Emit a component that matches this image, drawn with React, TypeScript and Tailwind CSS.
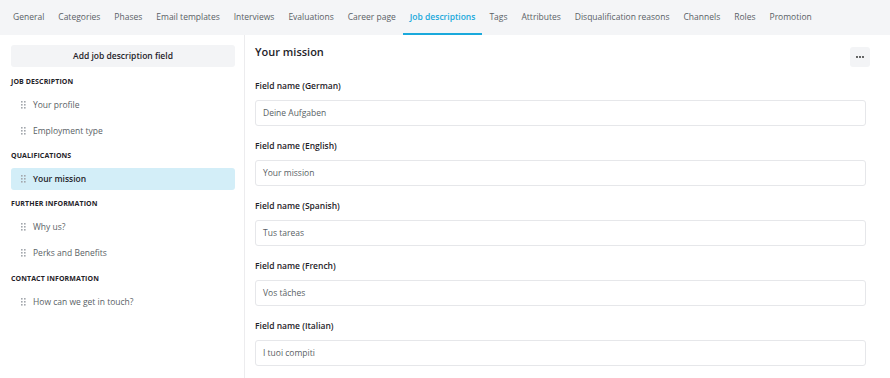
import React from "react";

const tabs = [
  "General",
  "Categories",
  "Phases",
  "Email templates",
  "Interviews",
  "Evaluations",
  "Career page",
  "Job descriptions",
  "Tags",
  "Attributes",
  "Disqualification reasons",
  "Channels",
  "Roles",
  "Promotion",
];

const sections = [
  { title: "JOB DESCRIPTION", items: ["Your profile", "Employment type"] },
  { title: "QUALIFICATIONS", items: ["Your mission"] },
  { title: "FURTHER INFORMATION", items: ["Why us?", "Perks and Benefits"] },
  { title: "CONTACT INFORMATION", items: ["How can we get in touch?"] },
];

const fields = [
  { label: "Field name (German)", value: "Deine Aufgaben" },
  { label: "Field name (English)", value: "Your mission" },
  { label: "Field name (Spanish)", value: "Tus tareas" },
  { label: "Field name (French)", value: "Vos tâches" },
  { label: "Field name (Italian)", value: "I tuoi compiti" },
];

function Grip() {
  return (
    <svg width="5" height="8" viewBox="0 0 5 8" className="shrink-0">
      {[0, 1].map((c) =>
        [0, 1, 2].map((r) => (
          <rect key={`${c}-${r}`} x={c * 3} y={r * 3} width="1.6" height="1.6" fill="#a3a7ad" />
        ))
      )}
    </svg>
  );
}

export default function App() {
  return (
    <div
      className="w-[890px] h-[378px] bg-white overflow-hidden text-[#222]"
      style={{ fontFamily: '"Open Sans", "Liberation Sans", sans-serif' }}
    >
      <div className="h-[35px] bg-[#f4f5f7] flex pl-[6px]">
        {tabs.map((t) => {
          const active = t === "Job descriptions";
          return (
            <div
              key={t}
              className={
                "h-full px-[7px] pt-[11px] border-b-2 text-[8.5px] leading-[12px] whitespace-nowrap " +
                (active
                  ? "border-[#1aa9dc] text-[#1aa9dc] font-semibold"
                  : "border-transparent text-[#5a5f66]")
              }
            >
              {t}
            </div>
          );
        })}
      </div>
      <div className="flex h-[343px]">
        <div className="w-[245px] shrink-0 border-r border-[#ececee] pl-[11px] pr-[9px] pt-[10px] flex flex-col gap-[6px]">
          <div className="h-[22px] mb-[1px] rounded-[3px] bg-[#f3f4f6] flex items-center justify-center text-[8.5px] font-semibold text-[#1f2329]">
            Add job description field
          </div>
          {sections.map((s, i) => (
            <div key={s.title} className={"flex flex-col gap-[4px] " + (i === 3 ? "mt-[1px]" : "")}>
              <div className="h-[16px] pt-[1px] flex items-center text-[7px] font-bold text-[#1f2329] tracking-[0.1px]">
                {s.title}
              </div>
              {s.items.map((it) => {
                const sel = it === "Your mission";
                return (
                  <div
                    key={it}
                    className={
                      "h-[22px] rounded-[3px] flex items-center gap-[7px] pl-[10px] text-[8.5px] " +
                      (sel ? "bg-[#d3eef8] font-semibold text-[#1f2329]" : "text-[#5a5f66]")
                    }
                  >
                    <Grip />
                    <span>{it}</span>
                  </div>
                );
              })}
            </div>
          ))}
        </div>
        <div className="flex-1 pl-[10px] pr-[24px] pt-[10px]">
          <div className="flex items-start justify-between mr-[-4px]">
            <div className="text-[11px] font-semibold leading-[14px] text-[#1f2329]">Your mission</div>
            <div className="mt-[2px] w-[20px] h-[20px] rounded-[3px] bg-[#f3f4f6] flex items-center justify-center">
              <svg width="8" height="2" viewBox="0 0 8 2">
                <circle cx="1" cy="1" r="0.9" fill="#222" />
                <circle cx="4" cy="1" r="0.9" fill="#222" />
                <circle cx="7" cy="1" r="0.9" fill="#222" />
              </svg>
            </div>
          </div>
          <div className="mt-[13px] flex flex-col gap-[14px]">
            {fields.map((f) => (
              <div key={f.label} className="flex flex-col gap-[8px]">
                <div className="h-[12px] flex items-center text-[8.5px] font-semibold text-[#1f2329]">
                  {f.label}
                </div>
                <div className="h-[26px] rounded-[3px] border border-[#e6e7ea] flex items-center px-[7px] text-[8.5px] text-[#5a5f66]">
                  {f.value}
                </div>
              </div>
            ))}
          </div>
        </div>
      </div>
    </div>
  );
}
